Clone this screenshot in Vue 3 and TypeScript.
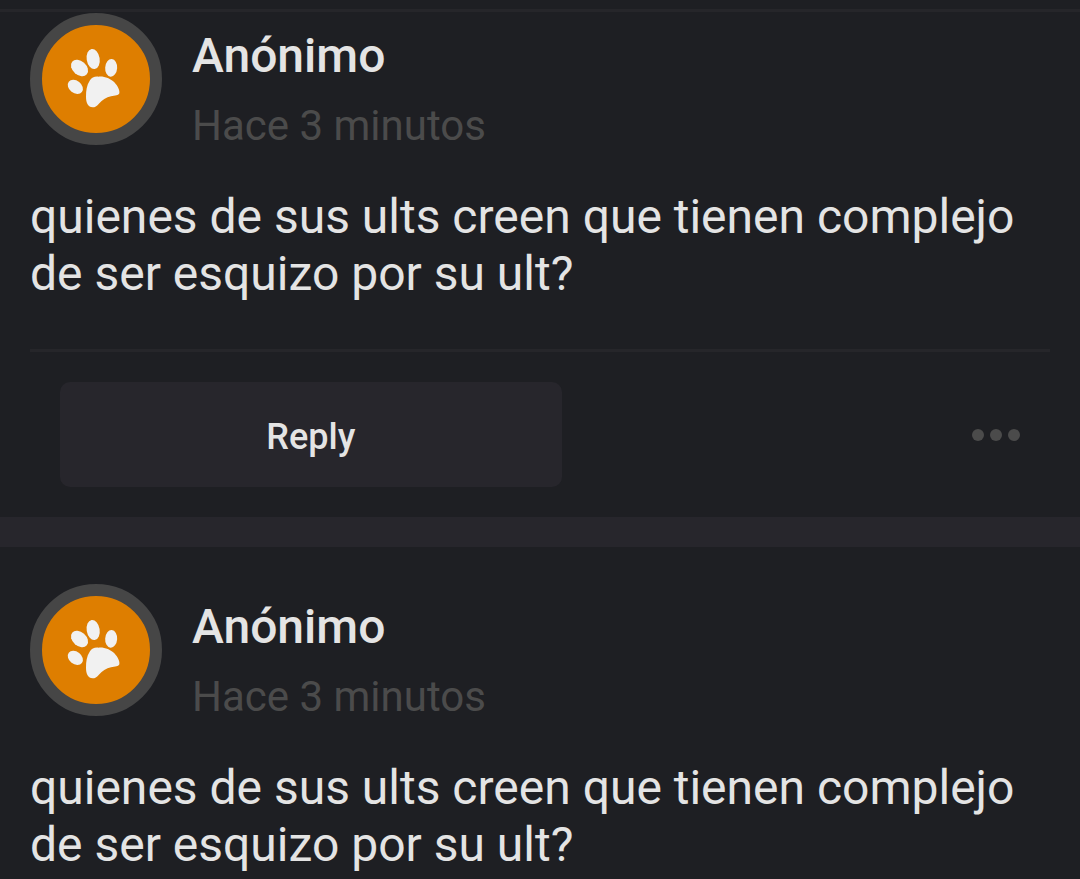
<script setup lang="ts">
interface Post {
  id: number
  author: string
  time: string
  text: string
  hasActions: boolean
}

const text = 'quienes de sus ults creen que tienen complejo de ser esquizo por su ult?'

const posts: Post[] = [
  { id: 1, author: 'Anónimo', time: 'Hace 3 minutos', text, hasActions: true },
  { id: 2, author: 'Anónimo', time: 'Hace 3 minutos', text, hasActions: false },
]
</script>

<template>
  <main class="feed">
    <article v-for="post in posts" :key="post.id" class="post">
      <header class="head">
        <div class="avatar">
          <svg class="paw" viewBox="-54 -45 324 324" aria-hidden="true">
            <ellipse cx="99.500" cy="57" rx="19.500" ry="30.500" transform="rotate(-9 99.500 57)" />
            <ellipse cx="58.500" cy="84" rx="29" ry="20.500" transform="rotate(41 58.500 84)" />
            <ellipse cx="153.500" cy="83.500" rx="18" ry="26.500" transform="rotate(4 153.500 83.500)" />
            <ellipse cx="46" cy="140.500" rx="25" ry="18.500" transform="rotate(38 46 140.500)" />
            <path
              d="M115 110 C132 108 151 115 163 127 C173 138 180 151 178 160 C176 167 165 167 153 169 C139 172 126 181 116 192 C110 199 105 202 98 202 C84 201 78 188 78 170 C78 152 80 135 89 122 C95 113 103 109 115 110 Z"
            />
          </svg>
        </div>
        <div class="meta">
          <h2 class="author">{{ post.author }}</h2>
          <time class="time">{{ post.time }}</time>
        </div>
      </header>
      <p class="body">{{ post.text }}</p>
      <footer v-if="post.hasActions" class="actions">
        <button type="button" class="reply">Reply</button>
        <button type="button" class="more" aria-label="More">
          <span class="dot"></span>
          <span class="dot"></span>
          <span class="dot"></span>
        </button>
      </footer>
    </article>
  </main>
</template>

<style>
body {
  background: #1e1f23;
}
</style>

<style scoped>
.feed {
  box-sizing: border-box;
  min-height: 100vh;
  padding-top: 9px;
  background: #1e1f23;
  color: #e4e4e4;
  font-family: Roboto, "Liberation Sans", sans-serif;
}

.post {
  padding: 37px 30px 0;
}

.post:first-child {
  padding-top: 1px;
  border-top: 3px solid #26262a;
}

.post + .post {
  border-top: 30px solid #27262c;
}

.head {
  display: flex;
  align-items: flex-start;
  gap: 30px;
}

.avatar {
  flex: none;
  box-sizing: border-box;
  width: 132px;
  height: 132px;
  border-radius: 50%;
  background: #de7e00;
  border: 12px solid #464646;
}

.paw {
  display: block;
  width: 100%;
  height: 100%;
  fill: #f1f1f1;
}

.meta {
  display: flex;
  flex-direction: column;
  gap: 17px;
  padding-top: 14px;
}

.author {
  margin: 0;
  font-size: 48px;
  font-weight: 500;
  line-height: 57px;
}

.time {
  font-size: 42px;
  line-height: 49px;
  color: #4b4b4b;
}

.body {
  margin: 38px 0 0;
  font-size: 48px;
  line-height: 57px;
}

.actions {
  display: grid;
  grid-template-columns: 11fr 9fr auto;
  align-items: center;
  margin-top: 47px;
  padding: 30px;
  border-top: 3px solid #26262a;
}

.reply {
  height: 105px;
  padding: 5px 0 0;
  border: 0;
  border-radius: 10px;
  background: #27262c;
  color: inherit;
  font-family: inherit;
  font-size: 36px;
  font-weight: 500;
  line-height: 42px;
}

.more {
  grid-column: 3;
  display: flex;
  gap: 6px;
  padding: 0;
  border: 0;
  background: none;
}

.dot {
  width: 12px;
  height: 12px;
  border-radius: 50%;
  background: #4b4b4b;
}
</style>
